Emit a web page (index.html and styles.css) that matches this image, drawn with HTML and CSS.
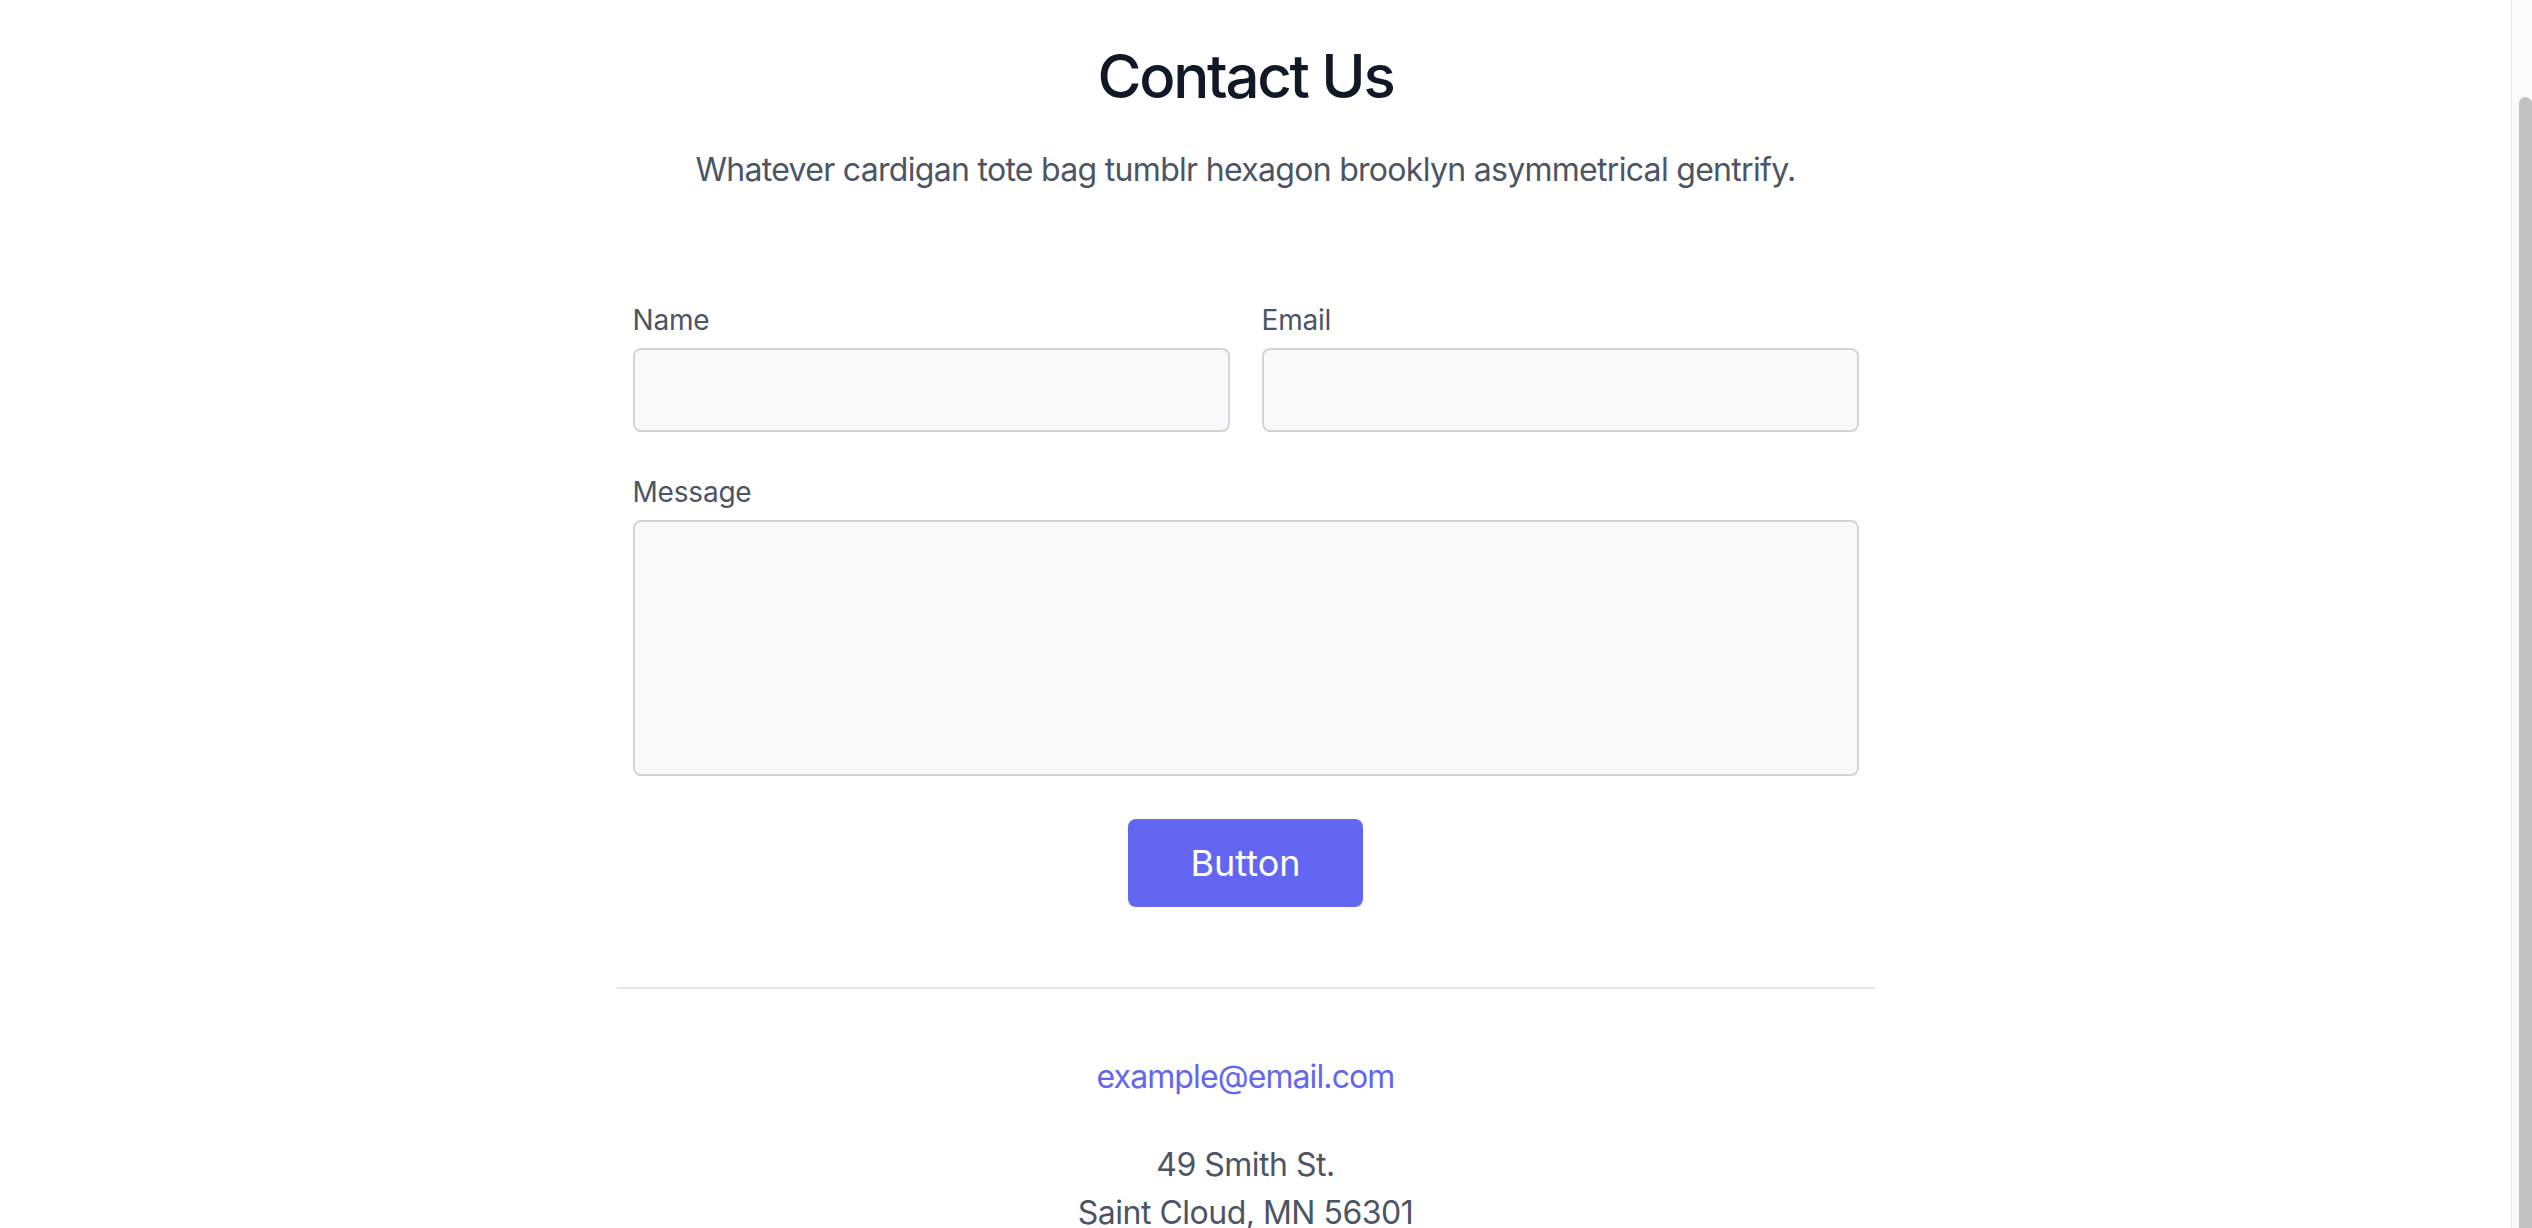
FILE: index.html
```html
<!DOCTYPE html>
<html lang="en">
<head>
<meta charset="utf-8">
<title>Contact Us</title>
<link rel="stylesheet" href="styles.css">
</head>
<body>
<div class="page">
  <main class="main">
    <section class="contact">
      <header class="intro">
        <h1 class="title">Contact Us</h1>
        <p class="lead">Whatever cardigan tote bag tumblr hexagon brooklyn asymmetrical gentrify.</p>
      </header>
      <form class="form">
        <div class="grid">
          <div class="cell half">
            <label class="label" for="name">Name</label>
            <input class="field" id="name" name="name" type="text">
          </div>
          <div class="cell half">
            <label class="label" for="email">Email</label>
            <input class="field" id="email" name="email" type="email">
          </div>
          <div class="cell full">
            <label class="label" for="message">Message</label>
            <textarea class="field area" id="message" name="message"></textarea>
          </div>
          <div class="cell full actions">
            <button class="btn" type="button">Button</button>
          </div>
          <div class="cell full footer">
            <a class="mail" href="#">example@email.com</a>
            <p class="address">49 Smith St.<br>Saint Cloud, MN 56301</p>
          </div>
        </div>
      </form>
    </section>
  </main>
  <div class="scrollbar"><div class="thumb"></div></div>
</div>
</body>
</html>
```

FILE: styles.css
```css
html, body {
  margin: 0;
  padding: 0;
  height: 100%;
  overflow: hidden;
}

body {
  font-family: Inter, "Noto Sans", "Liberation Sans", sans-serif;
  background: #ffffff;
  color: #4b5563;
}

.page {
  display: flex;
  height: 1228px;
}

.main {
  flex: 1;
  padding-right: 20px;
}

.scrollbar {
  width: 21px;
  border-left: 1px solid #e6e6e6;
  background: #fafafa;
  display: flex;
  flex-direction: column;
  padding-top: 97px;
  box-sizing: border-box;
}

.thumb {
  flex: 1;
  margin-left: 7px;
  background: #c1c1c1;
  border-radius: 7px 7px 0 0;
}

.contact {
  padding-top: 40px;
}

.intro {
  text-align: center;
  margin-bottom: 96px;
}

.title {
  margin: 0 0 32px;
  font-size: 60px;
  line-height: 72px;
  font-weight: 500;
  color: #111827;
  letter-spacing: -2.3px;
}

.lead {
  margin: 0;
  font-size: 32px;
  line-height: 52px;
  color: #4b5563;
  letter-spacing: -0.7px;
}

.form {
  width: 1226px;
  margin: 0 auto;
}

.grid {
  display: flex;
  flex-wrap: wrap;
  margin: -16px;
}

.cell {
  padding: 16px;
  box-sizing: border-box;
}

.half {
  width: 50%;
}

.full {
  width: 100%;
}

.label {
  display: block;
  font-size: 28px;
  line-height: 56px;
  color: #4b5563;
  letter-spacing: -0.2px;
}

.field {
  display: block;
  width: 100%;
  height: 84px;
  box-sizing: border-box;
  margin: 0;
  padding: 8px 24px;
  background: #f9f9fa;
  border: 2px solid #d1d5db;
  border-radius: 8px;
  font: inherit;
  font-size: 32px;
  color: #374151;
  outline: none;
}

.area {
  height: 256px;
  resize: none;
}

.actions {
  display: flex;
  justify-content: center;
  padding-top: 27px;
}

.btn {
  margin: 0;
  padding: 16px 62px;
  border: 0;
  border-radius: 8px;
  background: #6366f1;
  color: #ffffff;
  font-family: inherit;
  font-size: 36px;
  line-height: 56px;
  cursor: pointer;
}

.footer {
  margin-top: 64px;
  padding-top: 64px;
  border-top: 2px solid #e5e7eb;
  text-align: center;
}

.mail {
  font-size: 32px;
  line-height: 48px;
  color: #6366f1;
  text-decoration: none;
  letter-spacing: -0.9px;
}

.address {
  margin: 40px 0;
  font-size: 32px;
  line-height: 48px;
  color: #4b5563;
  letter-spacing: -0.5px;
}
```
